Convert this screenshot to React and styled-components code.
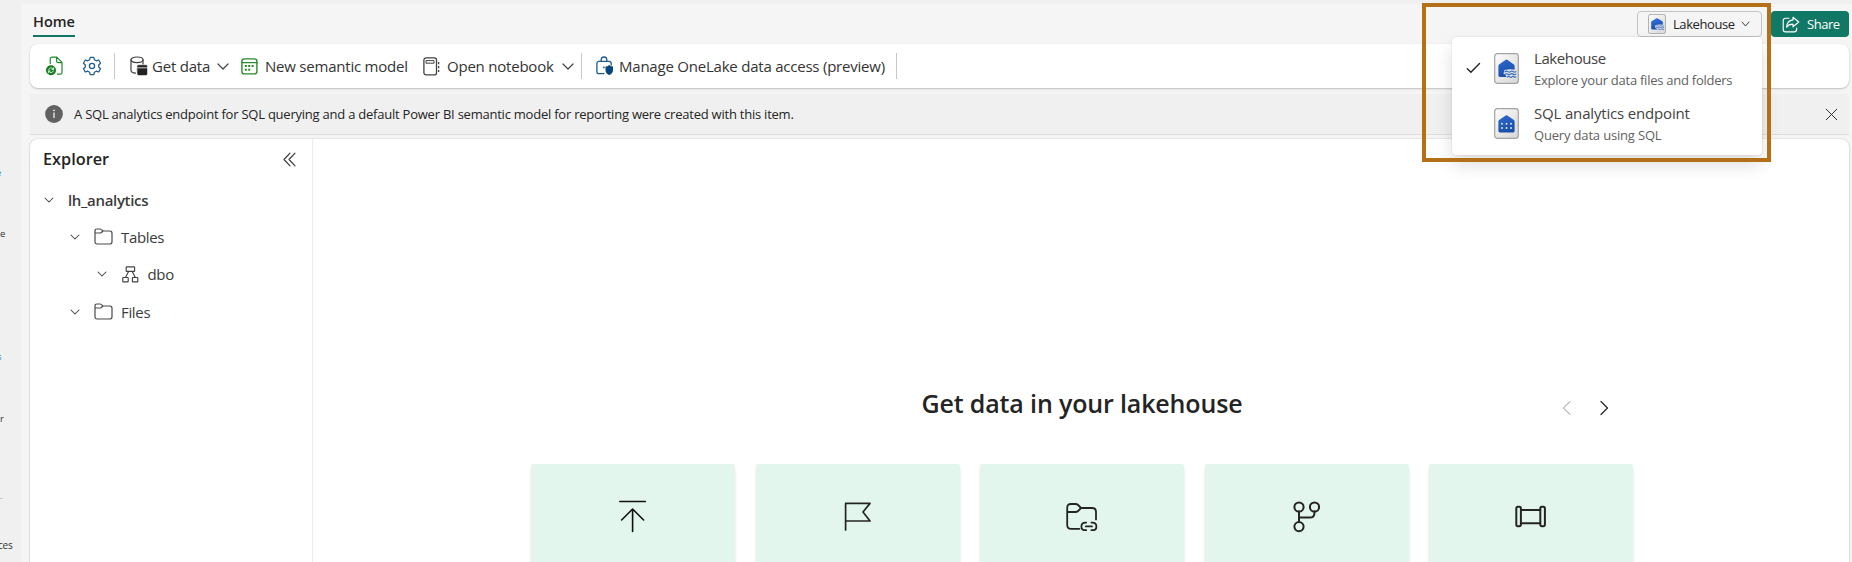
import React from "react";
import styled, { createGlobalStyle } from "styled-components";

const GlobalStyle = createGlobalStyle`
  *, *::before, *::after { box-sizing: border-box; }
  html, body { margin: 0; padding: 0; }
  body {
    background: #f0f0f0;
    color: #242424;
    font-family: "Open Sans", "Noto Sans", sans-serif;
    overflow: hidden;
  }
`;

const Shell = styled.div`
  position: relative;
  display: flex;
  width: 1852px;
  height: 562px;
  overflow: hidden;
`;

/* ---------- left navigation rail ---------- */
const Rail = styled.nav`
  display: flex;
  flex-direction: column;
  width: 21px;
  flex: none;
  padding-top: 165px;
  overflow: hidden;
`;

const RailLabel = styled.span`
  height: 16px;
  margin-bottom: ${(p) => p.$after}px;
  margin-left: ${(p) => p.$shift || 0}px;
  font-size: ${(p) => p.$size || 9.5}px;
  line-height: 16px;
  letter-spacing: -0.2px;
  color: ${(p) => p.$color || "#333"};
`;

const RailDivider = styled.span`
  width: 3px;
  height: 1px;
  margin-bottom: 38px;
  background: #c9c9c9;
`;

/* ---------- workspace ---------- */
const Workspace = styled.main`
  display: flex;
  flex-direction: column;
  flex: 1;
  margin-top: 4px;
  padding: 0 3px 0 9px;
  background: #f5f5f5;
`;

const Header = styled.header`
  display: flex;
  align-items: flex-start;
  justify-content: space-between;
  flex: none;
  height: 40px;
`;

const Tab = styled.button`
  width: 42px;
  height: 33px;
  margin-left: 3px;
  padding: 0;
  border: 0;
  border-bottom: 2px solid #117865;
  background: none;
  font: 600 14.5px/24px "Open Sans", sans-serif;
  color: #242424;
  white-space: nowrap;
`;

const TabText = styled.span`
  display: block;
  padding-top: 5px;
`;

const HeaderActions = styled.div`
  display: flex;
  gap: 9px;
  padding-top: 7px;
`;

const SwitchButton = styled.button`
  display: flex;
  align-items: center;
  width: 125px;
  height: 26px;
  padding: 0 0 0 10px;
  border: 1px solid #c4c4c4;
  border-radius: 4px;
  background: #f5f5f5;
  font: 400 13px/20px "Open Sans", sans-serif;
  letter-spacing: -0.42px;
  color: #242424;
`;

const ButtonText = styled.span`
  width: ${(p) => p.$width}px;
  margin: 0 ${(p) => p.$gap || 0}px 0 7px;
  text-align: left;
  white-space: nowrap;
`;

const ShareButton = styled.button`
  display: flex;
  align-items: center;
  width: 78px;
  height: 26px;
  padding: 0 0 0 11px;
  border: 0;
  border-radius: 4px;
  background: #117865;
  font: 400 13px/20px "Open Sans", sans-serif;
  letter-spacing: -0.45px;
  color: #fff;
`;

/* ---------- toolbar ---------- */
const Toolbar = styled.div`
  display: flex;
  align-items: center;
  flex: none;
  height: 44px;
  padding-left: 15px;
  border-radius: 8px;
  background: #fff;
  box-shadow: 0 1px 2px rgba(0, 0, 0, 0.22), 0 0 1px rgba(0, 0, 0, 0.1);
`;

const Tool = styled.button`
  display: flex;
  align-items: center;
  flex: none;
  width: ${(p) => p.$width}px;
  height: 32px;
  margin: 0 0 0 ${(p) => p.$before || 0}px;
  padding: 0;
  border: 0;
  background: none;
  font: 400 15px/22px "Open Sans", sans-serif;
  letter-spacing: -0.22px;
  color: #333;
`;

const ToolText = styled.span`
  flex: none;
  width: ${(p) => p.$width}px;
  margin: 0 8px 1px ${(p) => p.$gap}px;
  text-align: left;
  white-space: nowrap;
`;

const Separator = styled.span`
  width: 1px;
  height: 26px;
  margin-left: ${(p) => p.$before}px;
  background: #c7c7c7;
`;

/* ---------- notice ---------- */
const Notice = styled.div`
  display: flex;
  align-items: center;
  flex: none;
  height: 41px;
  margin-top: 6px;
  padding: 0 11px 0 15px;
  border-bottom: 1px solid #dcdcdc;
  background: #f0f0f0;
`;

const NoticeText = styled.p`
  flex: 1;
  margin: 0 0 0 11px;
  font-size: 13px;
  line-height: 20px;
  letter-spacing: -0.23px;
  white-space: nowrap;
`;

/* ---------- content panel ---------- */
const Panel = styled.section`
  display: flex;
  flex: 1;
  margin-top: 4px;
  border-radius: 8px 8px 0 0;
  background: #fff;
  box-shadow: 0 0 2px rgba(0, 0, 0, 0.2), 0 1px 2px rgba(0, 0, 0, 0.12);
`;

const Explorer = styled.aside`
  width: 283px;
  flex: none;
  border-right: 1px solid #ededed;
`;

const ExplorerHeader = styled.div`
  display: flex;
  align-items: center;
  justify-content: space-between;
  height: 40px;
  padding: 0 16px 0 13px;
`;

const ExplorerTitle = styled.h2`
  margin: 0;
  font-size: 16.3px;
  font-weight: 600;
  line-height: 22px;
`;

const TreeRow = styled.div`
  display: flex;
  align-items: center;
  height: 37.33px;
  padding-left: ${(p) => 13.5 + p.$level * 26.5}px;
  font-size: 15px;
  font-weight: ${(p) => (p.$level === 0 ? 600 : 400)};
  line-height: 22px;
  letter-spacing: -0.33px;
  color: #3b3b3b;

  &:first-of-type { margin-top: 2px; }
`;

const TreeIcon = styled.span`
  display: flex;
  margin-left: ${(p) => p.$before}px;
`;

const TreeText = styled.span`
  margin-left: ${(p) => p.$gap}px;
`;

const Canvas = styled.div`
  display: flex;
  flex-direction: column;
  flex: 1;
  padding: 246px 216px 0 218px;
`;

const CarouselHeader = styled.div`
  display: grid;
  grid-template-columns: 1fr auto 1fr;
  align-items: center;
  height: 36px;
`;

const CarouselTitle = styled.h1`
  grid-column: 2;
  margin: 0;
  font-size: 25px;
  font-weight: 600;
  line-height: 34px;
  letter-spacing: -0.15px;
  white-space: nowrap;
`;

const CarouselNav = styled.div`
  display: flex;
  justify-content: flex-end;
  gap: 21px;
  padding: 9px 21px 0 0;
`;

const Cards = styled.div`
  display: grid;
  grid-template-columns: repeat(5, 204px);
  justify-content: space-between;
  margin-top: 43px;
`;

const Card = styled.div`
  display: flex;
  justify-content: center;
  height: 110px;
  padding-top: 34px;
  border-radius: 2px;
  background: #e3f6ee;
  box-shadow: 0 4px 3px rgba(0, 0, 0, 0.12);
`;

/* ---------- view menu ---------- */
const Menu = styled.div`
  position: absolute;
  top: 37px;
  left: 1452px;
  width: 310px;
  height: 118px;
  padding: 3px 0;
  border-radius: 4px;
  background: #fff;
  box-shadow: 0 0 2px rgba(0, 0, 0, 0.14), 0 10px 18px rgba(0, 0, 0, 0.13);
`;

const MenuItem = styled.div`
  display: flex;
  align-items: center;
  height: 55px;
  padding: 1px 0 0 14px;
`;

const CheckSlot = styled.span`
  display: flex;
  width: 28px;
`;

const MenuCopy = styled.div`
  margin-left: 15px;
  padding-top: 2px;
  color: #424242;
`;

const MenuTitle = styled.div`
  font-size: 15px;
  line-height: 22px;
  letter-spacing: ${(p) => p.$track}px;
`;

const MenuHint = styled.div`
  padding-top: 1px;
  font-size: 13px;
  line-height: 21px;
  letter-spacing: ${(p) => p.$track}px;
  color: #616161;
`;

const Highlight = styled.div`
  position: absolute;
  top: 3px;
  left: 1422px;
  width: 349px;
  height: 159px;
  border: 4px solid #b37017;
  pointer-events: none;
`;

/* ---------- drawings ---------- */
const Svg = styled.svg`
  display: block;
  flex: none;
  fill: none;
  stroke: ${(p) => p.$color || "#424242"};
  stroke-width: ${(p) => p.$weight || 1.2};
  stroke-linecap: round;
  stroke-linejoin: round;
`;

const Icon = ({ w, h, color, weight, children }) => (
  <Svg width={w} height={h} viewBox={`0 0 ${w} ${h}`} $color={color} $weight={weight}>
    {children}
  </Svg>
);

const ChevronDown = ({ w = 12, h = 7, color, weight }) => (
  <Icon w={w} h={h} color={color} weight={weight}>
    <path d={`M1 1L${w / 2} ${h - 1}L${w - 1} 1`} />
  </Icon>
);

const RefreshFileIcon = () => (
  <Icon w={19} h={20} color="#1f8a28" weight={1.2}>
    <path d="M5.2 7.6V3.2Q5.2 1.2 7.2 1.2H11.8L17 6.4V16.4Q17 18.2 15.2 18.2H12.5M11.6 1.4V5Q11.6 6.6 13.2 6.6H16.8" />
    <circle cx="6" cy="14.2" r="5" fill="#117d1b" stroke="none" />
    <path d="M3.6 13.6Q4.4 11.8 6 11.8T8.4 13.4M8.6 11.6V13.5H6.9M8.4 14.9Q7.6 16.6 6 16.6T3.6 15M3.4 16.8V14.9H5.1" stroke="#fff" strokeWidth="0.8" />
  </Icon>
);

const GearIcon = () => (
  <Icon w={20} h={20} color="#1c5c92" weight={1.25}>
    <path d="M8.2 1.3H11.8L12.4 3.8L14.2 4.8L16.7 4L18.5 7.2L16.7 9V11L18.5 12.8L16.7 16L14.2 15.2L12.4 16.2L11.8 18.7H8.2L7.6 16.2L5.8 15.2L3.3 16L1.5 12.8L3.3 11V9L1.5 7.2L3.3 4L5.8 4.8L7.6 3.8Z" />
    <circle cx="10" cy="10" r="2.6" />
  </Icon>
);

const DatabaseIcon = () => (
  <Icon w={18} h={20} color="#424242">
    <ellipse cx="7" cy="3.8" rx="6" ry="2.8" />
    <path d="M1 3.8V14.6Q1.4 16.8 5.5 17.2M13 3.8V8" />
    <path d="M7.5 11V10.2Q7.5 9.2 8.5 9.2H16Q17 9.2 17 10.2V11ZM7.5 12.5H17V18Q17 19 16 19H8.5Q7.5 19 7.5 18Z" fill="#222" stroke="#222" strokeWidth="0.5" />
  </Icon>
);

const ModelIcon = () => (
  <Icon w={17} h={17} color="#278b2c" weight={1.4}>
    <rect x="0.9" y="0.9" width="15" height="15" rx="2.4" />
    <path d="M1 4.6H16" />
    <g fill="#278b2c" stroke="none">
      <rect x="7.2" y="7" width="2" height="2" />
      <rect x="10.6" y="7" width="2" height="2" />
      <rect x="3.8" y="7" width="2" height="2" />
      <rect x="3.8" y="10.7" width="2" height="2" />
      <rect x="7.2" y="10.7" width="2" height="2" />
    </g>
  </Icon>
);

const NotebookIcon = () => (
  <Icon w={17} h={19} color="#424242" weight={1.3}>
    <rect x="0.9" y="0.9" width="12.6" height="17" rx="2.2" />
    <rect x="3.4" y="3.6" width="7.6" height="2.6" strokeWidth="1" />
    <path d="M15.6 5V7.2M15.6 9V11.2M15.6 13V15" strokeLinecap="butt" />
  </Icon>
);

const AccessIcon = () => (
  <Icon w={18} h={20} color="#1c5c92" weight={1.3}>
    <path d="M5.2 5V3.7Q5.2 1 8 1T10.8 3.7V5M15.2 9V7.5Q15.2 5.3 13 5.3H3Q.9 5.3 .9 7.5V15.4Q.9 17.6 3 17.6H8" />
    <circle cx="7.8" cy="11.4" r=".9" fill="#1c5c92" stroke="none" />
    <path d="M13.2 8.9Q14.8 10.6 17 10.6V14Q17 17.6 13.2 19.1Q9.5 17.6 9.5 14V10.6Q11.6 10.6 13.2 8.9Z" fill="#07457a" stroke="none" />
  </Icon>
);

const InfoIcon = () => (
  <Icon w={18} h={18}>
    <circle cx="9" cy="9" r="8.9" fill="#616161" stroke="none" />
    <path d="M9 7.6V13" stroke="#f0f0f0" strokeLinecap="butt" strokeWidth="1.3" />
    <circle cx="9" cy="5.3" r=".9" fill="#f0f0f0" stroke="none" />
  </Icon>
);

const CloseIcon = () => (
  <Icon w={13} h={13} color="#333" weight={1}>
    <path d="M1.2 1.2L11.8 11.8M11.8 1.2L1.2 11.8" />
  </Icon>
);

const FolderIcon = () => (
  <Icon w={19} h={17} color="#4a4a4a" weight={1.2}>
    <path d="M1 5V3Q1 1 3 1H6Q6.8 1 7.4 1.6L9 3H15.8Q18 3 18 5.2V13.8Q18 16 15.8 16H3.2Q1 16 1 13.8V5H6Q6.8 5 7.4 4.5L9 3" />
  </Icon>
);

const SchemaIcon = () => (
  <Icon w={17} h={17} color="#424242" weight={1.15}>
    <rect x="4.2" y="0.8" width="8.4" height="4.6" rx=".5" />
    <rect x=".8" y="11.5" width="5.4" height="4.4" rx=".5" />
    <rect x="10.4" y="11.5" width="5.4" height="4.4" rx=".5" />
    <path d="M6.6 5.6L3.6 11.3M10.2 5.6L13.2 11.3" />
  </Icon>
);

const CollapseIcon = () => (
  <Icon w={13} h={15} color="#333" weight={1.1}>
    <path d="M7 1.2L1 7.5L7 13.8M12 1.2L6 7.5L12 13.8" />
  </Icon>
);

const ShareIcon = () => (
  <Icon w={18} h={17} color="#fff" weight={1.15}>
    <path d="M7 2.2H3.6Q1.2 2.2 1.2 4.6V13.4Q1.2 15.8 3.6 15.8H12.2Q14.6 15.8 14.6 13.4V12" />
    <path d="M11 1.2L16.8 6L11 10.8V8.2Q7 8 4.6 11.2Q5 4.6 11 3.9Z" />
  </Icon>
);

const CheckIcon = () => (
  <Icon w={15} h={12} color="#242424" weight={1.4}>
    <path d="M1.3 6.8L4.9 10.2L13.5 1.6" />
  </Icon>
);

const LakeTile = ({ w, h, kind, id, tint = "#2b68d1" }) => (
  <Svg width={w} height={h} viewBox="0 0 25 31" preserveAspectRatio="none">
    <defs>
      <linearGradient id={`${id}-tile`} x1="0" y1="0" x2="1" y2="1">
        <stop offset="0" stopColor="#fdfdfd" />
        <stop offset="1" stopColor="#d6d6d6" />
      </linearGradient>
      <linearGradient id={`${id}-house`} x1="0" y1="0" x2="0.4" y2="1">
        <stop offset="0" stopColor={tint} />
        <stop offset="1" stopColor="#1c50a6" />
      </linearGradient>
    </defs>
    <rect x=".7" y=".7" width="23.6" height="29.6" rx="2.6" fill={`url(#${id}-tile)`} stroke="#a3a3a3" />
    {kind === "lake" ? (
      <>
        <path d="M4.4 12.9Q4.4 12 5.1 11.4L11.4 7Q12.5 6.2 13.6 7L19.9 11.4Q20.6 12 20.6 12.9V16.8Q17 15.8 10.5 17L9.5 20.5L11.5 22L12.5 24H5.8Q4.4 24 4.4 22.6Z" fill={`url(#${id}-house)`} stroke="none" />
        <path d="M11 18.9Q12.3 17.5 13.8 18.6T16.5 18.6T19.2 18.6T21.8 18.6M11 21.5Q12.3 20.1 13.8 21.2T16.5 21.2T19.2 21.2T21.8 21.2M13.4 24Q14.6 22.7 15.8 23.8T18 23.8T20 23.8T21.8 23.8" stroke="#2d66bd" strokeWidth="1.1" />
      </>
    ) : (
      <>
        <path d="M4.4 13.6Q4.4 12.7 5.1 12.1L11.4 7.7Q12.5 6.9 13.6 7.7L19.9 12.1Q20.6 12.7 20.6 13.6V23Q20.6 24.4 19.2 24.4H5.8Q4.4 24.4 4.4 23Z" fill={`url(#${id}-house)`} stroke="none" />
        <g fill="#e8eefa" stroke="none">
          {[8, 12.5, 17].map((x) => (
            <React.Fragment key={x}>
              <circle cx={x} cy="15.7" r=".95" />
              <circle cx={x} cy="20" r=".95" />
            </React.Fragment>
          ))}
        </g>
      </>
    )}
  </Svg>
);

const UploadIcon = () => (
  <Icon w={32} h={36} color="#111" weight={1.6}>
    <path d="M2.8 3.5H28.4M15.6 33.5V11M4.6 22L15.6 11L26.6 22" />
  </Icon>
);

const FlagIcon = () => (
  <Icon w={32} h={36} color="#242424" weight={1.7}>
    <path d="M3.6 32V5.4H28L21 14L28 23H3.6" />
  </Icon>
);

const LinkedFolderIcon = () => (
  <Icon w={32} h={36} color="#242424" weight={1.8}>
    <path d="M1.2 14V9.8Q1.2 6 5 6H9.4Q11 6 12.1 7L15 10H26.2Q30 10 30 13.8V21.4M1.2 14V27Q1.2 30.8 5 30.8H13.4M1.2 14H9.4Q11 14 12.1 13L15 10" />
    <path d="M20.2 24.6H19.4Q15.4 24.6 15.4 28.4T19.4 32.2H20.2M25.4 24.6H26.4Q30.4 24.6 30.4 28.4T26.4 32.2H25.4M19.8 28.4H26" />
  </Icon>
);

const BranchIcon = () => (
  <Icon w={32} h={36} color="#242424" weight={2}>
    <circle cx="8" cy="9" r="4.6" />
    <circle cx="23.5" cy="9" r="4.6" />
    <circle cx="8" cy="28.6" r="4.6" />
    <path d="M8 13.6V24M8 19.6H18.6Q23.5 19.6 23.5 14.7V13.6" />
  </Icon>
);

const PipelineIcon = () => (
  <Icon w={32} h={36} color="#242424" weight={2}>
    <rect x="1.3" y="8.8" width="4.6" height="19.4" rx="1.6" />
    <rect x="25.3" y="8.8" width="4.6" height="19.4" rx="1.6" />
    <path d="M6 12H25.2M6 25.2H25.2" />
  </Icon>
);

const cardIcons = [UploadIcon, FlagIcon, LinkedFolderIcon, BranchIcon, PipelineIcon];

const tree = [
  { label: "lh_analytics", level: 0, gap: 14.5 },
  { label: "Tables", level: 1, icon: FolderIcon, before: 13.5, gap: 8.5 },
  { label: "dbo", level: 2, icon: SchemaIcon, before: 15, gap: 9 },
  { label: "Files", level: 1, icon: FolderIcon, before: 13.5, gap: 8.5 },
];

export default function App() {
  return (
    <>
      <GlobalStyle />
      <Shell>
        <Rail>
          <RailLabel $after={45} $shift={-4} $color="#36a3ad">e</RailLabel>
          <RailLabel $after={107}>e</RailLabel>
          <RailLabel $after={46} $shift={-3} $color="#2878c0">s</RailLabel>
          <RailLabel $after={71}>r</RailLabel>
          <RailDivider />
          <RailLabel $after={0} $size={10} $shift={-2}>ces</RailLabel>
        </Rail>

        <Workspace>
          <Header>
            <Tab><TabText>Home</TabText></Tab>
            <HeaderActions>
              <SwitchButton>
                <LakeTile w={18} h={20} kind="lake" id="switch" tint="#3574e6" />
                <ButtonText $width={60} $gap={8}>Lakehouse</ButtonText>
                <ChevronDown w={9} h={6} weight={1} />
              </SwitchButton>
              <ShareButton>
                <ShareIcon />
                <ButtonText $width={33}>Share</ButtonText>
              </ShareButton>
            </HeaderActions>
          </Header>

          <Toolbar>
            <Tool $width={19}><RefreshFileIcon /></Tool>
            <Tool $width={20} $before={18}><GearIcon /></Tool>
            <Separator $before={12} />
            <Tool $width={99} $before={15}>
              <DatabaseIcon />
              <ToolText $width={57} $gap={4}>Get data</ToolText>
              <ChevronDown />
            </Tool>
            <Tool $width={166} $before={12}>
              <ModelIcon />
              <ToolText $width={142} $gap={7}>New semantic model</ToolText>
            </Tool>
            <Tool $width={151} $before={16}>
              <NotebookIcon />
              <ToolText $width={107} $gap={7}>Open notebook</ToolText>
              <ChevronDown />
            </Tool>
            <Separator $before={7} />
            <Tool $width={290} $before={14}>
              <AccessIcon />
              <ToolText $width={266} $gap={5}>Manage OneLake data access (preview)</ToolText>
            </Tool>
            <Separator $before={10} />
          </Toolbar>

          <Notice>
            <InfoIcon />
            <NoticeText>
              A SQL analytics endpoint for SQL querying and a default Power BI semantic model for reporting were created with this item.
            </NoticeText>
            <CloseIcon />
          </Notice>

          <Panel>
            <Explorer>
              <ExplorerHeader>
                <ExplorerTitle>Explorer</ExplorerTitle>
                <CollapseIcon />
              </ExplorerHeader>
              <div>
                {tree.map(({ label, level, icon: NodeIcon, before, gap }) => (
                  <TreeRow key={label} $level={level}>
                    <ChevronDown w={10} h={6} weight={1.05} />
                    {NodeIcon && <TreeIcon $before={before}><NodeIcon /></TreeIcon>}
                    <TreeText $gap={gap}>{label}</TreeText>
                  </TreeRow>
                ))}
              </div>
            </Explorer>
            <Canvas>
              <CarouselHeader>
                <CarouselTitle>Get data in your lakehouse</CarouselTitle>
                <CarouselNav>
                  <Icon w={16} h={16} color="#bdbdbd" weight={1.1}><path d="M11 1.5L4.5 8L11 14.5" /></Icon>
                  <Icon w={16} h={16} color="#242424" weight={1.2}><path d="M5 1.5L11.5 8L5 14.5" /></Icon>
                </CarouselNav>
              </CarouselHeader>
              <Cards>
                {cardIcons.map((CardIcon, i) => (
                  <Card key={i}><CardIcon /></Card>
                ))}
              </Cards>
            </Canvas>
          </Panel>
        </Workspace>

        <Menu>
          <MenuItem>
            <CheckSlot><CheckIcon /></CheckSlot>
            <LakeTile w={25} h={31} kind="lake" id="lake" />
            <MenuCopy>
              <MenuTitle $track={-0.4}>Lakehouse</MenuTitle>
              <MenuHint $track={-0.25}>Explore your data files and folders</MenuHint>
            </MenuCopy>
          </MenuItem>
          <MenuItem>
            <CheckSlot />
            <LakeTile w={25} h={31} kind="sql" id="sql" />
            <MenuCopy>
              <MenuTitle $track={-0.17}>SQL analytics endpoint</MenuTitle>
              <MenuHint $track={-0.17}>Query data using SQL</MenuHint>
            </MenuCopy>
          </MenuItem>
        </Menu>
        <Highlight />
      </Shell>
    </>
  );
}
